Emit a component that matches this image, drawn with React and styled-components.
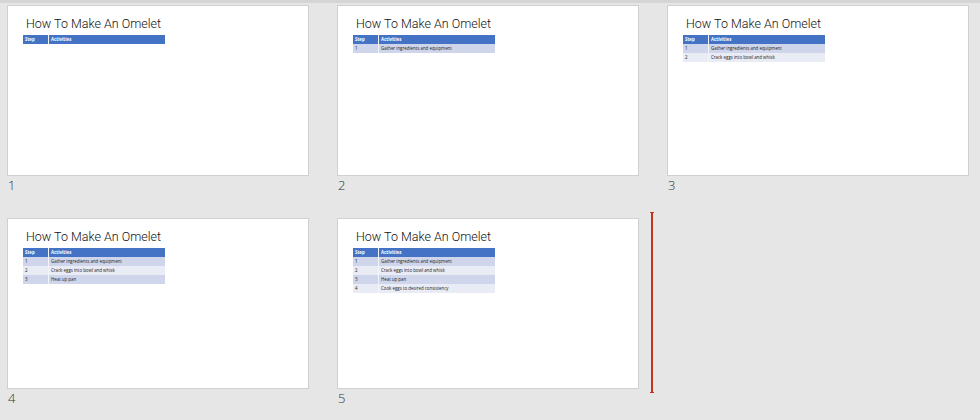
import React from "react";
import styled, { createGlobalStyle } from "styled-components";

const GlobalStyle = createGlobalStyle`
	html, body {
		margin: 0;
		padding: 0;
		background: #e6e6e6;
		overflow: hidden;
	}
`;

const Sorter = styled.div`
	width: 980px;
	height: 420px;
	box-sizing: border-box;
	border-top: 3px solid #d5d5d5;
	padding: 2px 0 0 7px;
	display: grid;
	grid-template-columns: repeat(3, 302px);
	grid-auto-rows: 213px;
	column-gap: 28px;
	font-family: "Open Sans", "Liberation Sans", sans-serif;
`;

const Thumb = styled.div`
	position: relative;
`;

const Slide = styled.div`
	box-sizing: border-box;
	width: 302px;
	height: 171px;
	background: #fff;
	border: 1px solid #d0d0d0;
	padding: 9px 0 0 15px;
`;

const Title = styled.div`
	font-family: Roboto, "Open Sans", sans-serif;
	font-size: 12.5px;
	font-weight: 300;
	line-height: 18px;
	color: #111;
	padding-left: 3px;
	margin-bottom: 2px;
	white-space: nowrap;
`;

const Table = styled.div`
	width: 142px;
	font-size: 4.4px;
	line-height: 9px;
	color: #222;
`;

const Row = styled.div`
	display: grid;
	grid-template-columns: 25px 1fr;
	height: 9px;
	background: ${(p) => (p.$odd ? "#cfd5ea" : "#e9ebf5")};
`;

const HeadRow = styled(Row)`
	background: #4472c4;
	color: #fff;
	font-weight: 700;
`;

const Cell = styled.div`
	padding-left: 2px;
	white-space: nowrap;
	border-left: ${(p) => (p.$divide ? "1px solid #f2f4fa" : "0")};
`;

const Number = styled.div`
	font-size: 13px;
	line-height: 16px;
	font-weight: 300;
	color: #333;
	padding: 1px 0 0 1px;
`;

const InsertMarker = styled.div`
	position: absolute;
	left: 314px;
	top: -6px;
	width: 2px;
	height: 181px;
	background: #c4351c;

	&::before,
	&::after {
		content: "";
		position: absolute;
		left: -1px;
		width: 4px;
		height: 1px;
		background: #c4351c;
	}
	&::before {
		top: 0;
	}
	&::after {
		bottom: 0;
	}
`;

const steps = [
	"Gather ingredients and equipment",
	"Crack eggs into bowl and whisk",
	"Heat up pan",
	"Cook eggs to desired consistency",
];

function SlideThumb({ count, marker }) {
	return (
		<Thumb>
			<Slide>
				<Title>How To Make An Omelet</Title>
				<Table>
					<HeadRow>
						<Cell>Step</Cell>
						<Cell $divide>Activities</Cell>
					</HeadRow>
					{steps.slice(0, count).map((step, i) => (
						<Row key={step} $odd={i % 2 === 0}>
							<Cell>{i + 1}</Cell>
							<Cell $divide>{step}</Cell>
						</Row>
					))}
				</Table>
			</Slide>
			<Number>{count + 1}</Number>
			{marker && <InsertMarker />}
		</Thumb>
	);
}

export default function App() {
	return (
		<Sorter>
			<GlobalStyle />
			{[0, 1, 2, 3, 4].map((count) => (
				<SlideThumb key={count} count={count} marker={count === 4} />
			))}
		</Sorter>
	);
}
